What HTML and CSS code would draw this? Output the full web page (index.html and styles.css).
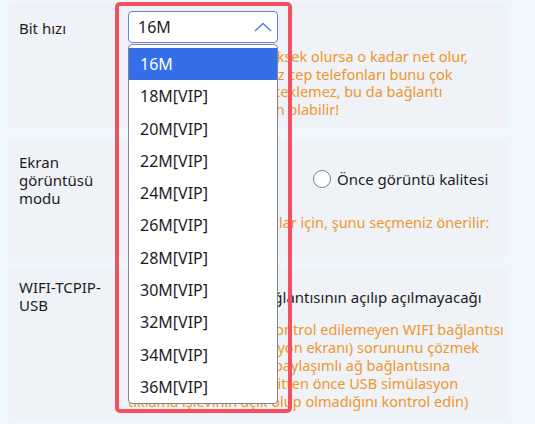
FILE: index.html
```html
<!DOCTYPE html>
<html lang="tr">
<head>
  <meta charset="UTF-8">
  <title>Ayarlar</title>
  <link rel="stylesheet" href="styles.css">
</head>
<body>

<div class="ayarlar">

  <div class="kart kart-bit">
    <div class="etiket">Bit hızı</div>
    <div class="icerik">
      <div class="secim">
        <div class="secim-kutu">
          <span>16M</span>
          <svg class="ok" width="18" height="10" viewBox="0 0 18 10"><path d="M1 9 L9 1.5 L17 9" fill="none" stroke="#4f7fe9" stroke-width="1.5"/></svg>
        </div>
        <ul class="liste">
          <li class="secili">16M</li>
          <li>18M[VIP]</li>
          <li>20M[VIP]</li>
          <li>22M[VIP]</li>
          <li>24M[VIP]</li>
          <li>26M[VIP]</li>
          <li>28M[VIP]</li>
          <li>30M[VIP]</li>
          <li>32M[VIP]</li>
          <li>34M[VIP]</li>
          <li>36M[VIP]</li>
        </ul>
      </div>
      <p class="not">Bit hızınız ne kadar yüksek olursa o kadar net olur,<br>ancak bazı eski ve ucuz cep telefonları bunu çok<br>iyi bir şekilde tam desteklemez, bu da bağlantı<br>hep kesilmesine neden olabilir!</p>
    </div>
  </div>

  <div class="kart kart-ekran">
    <div class="etiket">Ekran görüntüsü modu</div>
    <div class="icerik">
      <div class="secenekler">
        <label class="secenek ilk"><span class="radyo"></span>Önce akıcılık</label>
        <label class="secenek"><span class="radyo"></span>Önce görüntü kalitesi</label>
      </div>
      <p class="not">Zayıf Donanımlı, Cihazlar için, şunu seçmeniz önerilir:</p>
    </div>
  </div>

  <div class="kart kart-wifi">
    <div class="etiket">WIFI-TCPIP-USB</div>
    <div class="icerik">
      <label class="onay"><span class="kutu"></span>Otomatik WIFI bağlantısının açılıp açılmayacağı</label>
      <p class="not">(Bazı telefonlarında, kontrol edilemeyen WIFI bağlantısı<br>ya da donmuş animasyon ekranı) sorununu çözmek<br>için önce bilgisayarın paylaşımlı ağ bağlantısına<br>Geçmek için, USB'ye gitten önce USB simülasyon<br>tıklama işlevinin açık olup olmadığını kontrol edin)</p>
    </div>
  </div>

  <div class="vurgu"></div>

</div>

</body>
</html>
```

FILE: styles.css
```css
body {
  font-family: 'Noto Sans', sans-serif;
  background-color: #eef6fe;
  margin: 0;
  color: #1d1d1f;
}

.ayarlar {
  position: relative;
  padding: 2px 28px 0 8px;
  display: flex;
  flex-direction: column;
  gap: 11px;
}

.kart {
  display: flex;
  background-color: #eff2f6;
  border-radius: 6px;
  padding: 9px 12px 0 11px;
  box-sizing: border-box;
}

.kart-bit { height: 126px; }
.kart-ekran { height: 118px; }
.kart-wifi { height: 151px; margin-top: -1px; }

.etiket {
  width: 96px;
  flex-shrink: 0;
  margin-right: 13px;
  font-size: 15px;
  line-height: 18px;
}

.kart-bit .etiket { margin-top: 8px; }
.kart-ekran .etiket { margin-top: 5px; }
.kart-wifi .etiket { margin-top: 2px; }

.icerik {
  flex: 1;
  font-size: 15px;
}

.not {
  margin: 0;
  color: #f0962e;
  font-size: 14.5px;
  line-height: 17.5px;
  white-space: nowrap;
}

/* acilir liste */
.secim {
  position: relative;
  width: 150px;
  z-index: 2;
}

.secim-kutu {
  height: 32px;
  box-sizing: border-box;
  border: 1px solid #5b87ec;
  border-radius: 4px;
  background: white;
  display: flex;
  align-items: center;
  justify-content: space-between;
  padding: 0 5px 0 9px;
  font-size: 16px;
}

.liste {
  position: absolute;
  top: 33px;
  left: 0;
  width: 150px;
  box-sizing: border-box;
  margin: 0;
  padding: 3px 0 0;
  list-style: none;
  background: white;
  border: 1px solid #83838f;
  border-radius: 4px;
  font-size: 16px;
}

.liste li {
  height: 32.3px;
  line-height: 32px;
  padding-left: 11px;
}

.liste .secili {
  background-color: #356ee9;
  color: white;
}

.kart-bit .not { margin-top: 5px; }

/* secenekler */
.secenekler {
  display: flex;
  margin-top: 19px;
  height: 24px;
  align-items: center;
}

.secenek {
  display: flex;
  align-items: center;
  gap: 6px;
}

.secenek.ilk { width: 185px; }

.radyo {
  width: 16px;
  height: 16px;
  border: 1px solid #7d7d8b;
  border-radius: 50%;
  background: white;
}

.kart-ekran .not { margin-top: 22px; line-height: 18px; }

/* wifi */
.onay {
  display: flex;
  align-items: center;
  gap: 6px;
  margin-top: 12px;
  line-height: 18px;
}

.kutu {
  width: 14px;
  height: 14px;
  border: 1px solid #7d7d8b;
  border-radius: 2px;
  background: white;
}

.kart-wifi .not { margin-top: 14px; line-height: 18px; }

/* kirmizi isaret */
.vurgu {
  position: absolute;
  left: 115px;
  top: 2px;
  width: 177px;
  height: 411px;
  box-sizing: border-box;
  border: 4px solid #f4505f;
  border-radius: 5px;
  z-index: 3;
}
```
